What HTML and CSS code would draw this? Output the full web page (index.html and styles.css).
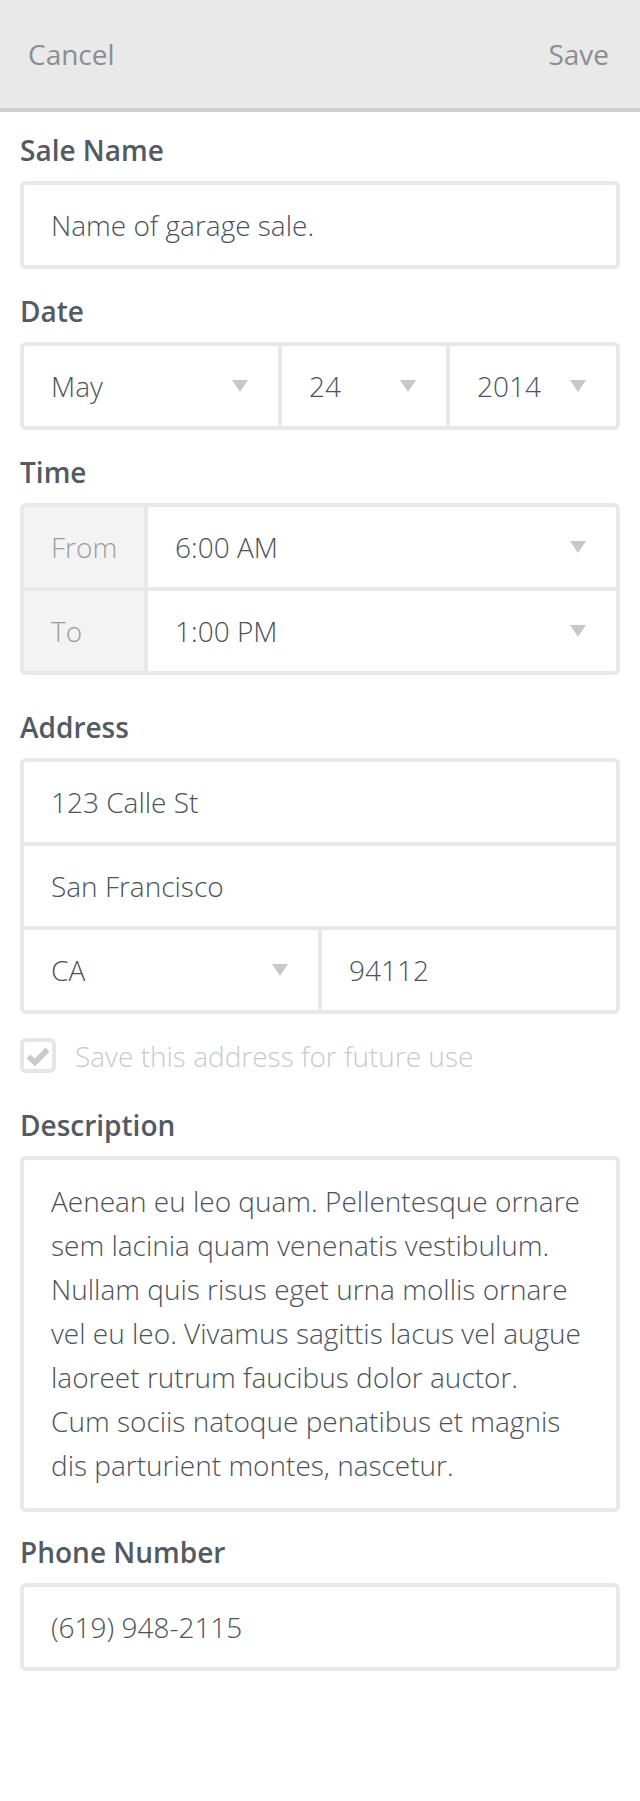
FILE: index.html
```html
<!DOCTYPE html>
<html lang="en">
<head>
<meta charset="utf-8">
<title>Garage Sale</title>
<link rel="stylesheet" href="styles.css">
</head>
<body>
<header class="topbar">
  <span class="nav-btn">Cancel</span>
  <span class="nav-btn">Save</span>
</header>

<main class="form">
  <section class="group">
    <h2 class="label">Sale Name</h2>
    <div class="box">
      <div class="row"><div class="cell">Name of garage sale.</div></div>
    </div>
  </section>

  <section class="group">
    <h2 class="label">Date</h2>
    <div class="box">
      <div class="row">
        <div class="cell select cell-month">May<svg class="caret" width="16" height="12" viewBox="0 0 16 12"><path d="M0 0H16L8 12Z"/></svg></div>
        <div class="cell select cell-day">24<svg class="caret" width="16" height="12" viewBox="0 0 16 12"><path d="M0 0H16L8 12Z"/></svg></div>
        <div class="cell select cell-year">2014<svg class="caret" width="16" height="12" viewBox="0 0 16 12"><path d="M0 0H16L8 12Z"/></svg></div>
      </div>
    </div>
  </section>

  <section class="group">
    <h2 class="label">Time</h2>
    <div class="box">
      <div class="row">
        <div class="cell addon">From</div>
        <div class="cell select grow">6:00 AM<svg class="caret" width="16" height="12" viewBox="0 0 16 12"><path d="M0 0H16L8 12Z"/></svg></div>
      </div>
      <div class="row">
        <div class="cell addon">To</div>
        <div class="cell select grow">1:00 PM<svg class="caret" width="16" height="12" viewBox="0 0 16 12"><path d="M0 0H16L8 12Z"/></svg></div>
      </div>
    </div>
  </section>

  <section class="group group-wide">
    <h2 class="label">Address</h2>
    <div class="box">
      <div class="row"><div class="cell">123 Calle St</div></div>
      <div class="row"><div class="cell">San Francisco</div></div>
      <div class="row">
        <div class="cell select half">CA<svg class="caret" width="16" height="12" viewBox="0 0 16 12"><path d="M0 0H16L8 12Z"/></svg></div>
        <div class="cell half">94112</div>
      </div>
    </div>
    <div class="check-row">
      <span class="checkbox"><svg width="24" height="20" viewBox="0 0 24 20"><path d="M2.5 10.5L9 16.5L21.5 3.5" fill="none" stroke="#cacacd" stroke-width="5.5" stroke-linejoin="miter"/></svg></span>
      <span class="check-text">Save this address for future use</span>
    </div>
  </section>

  <section class="group group-wide">
    <h2 class="label">Description</h2>
    <div class="box">
      <p class="textarea">Aenean eu leo quam. Pellentesque ornare<br>sem lacinia quam venenatis vestibulum.<br>Nullam quis risus eget urna mollis ornare<br>vel eu leo. Vivamus sagittis lacus vel augue<br>laoreet rutrum faucibus dolor auctor.<br>Cum sociis natoque penatibus et magnis<br>dis parturient montes, nascetur.</p>
    </div>
  </section>

  <section class="group group-tight">
    <h2 class="label">Phone Number</h2>
    <div class="box">
      <div class="row"><div class="cell">(619) 948-2115</div></div>
    </div>
  </section>
</main>
</body>
</html>
```

FILE: styles.css
```css
* {
  box-sizing: border-box;
}

html, body {
  margin: 0;
  padding: 0;
  background: #ffffff;
}

body {
  font-family: "Open Sans", "Liberation Sans", sans-serif;
  color: #4b5259;
}

.topbar {
  height: 112px;
  background: #e9e9e9;
  border-bottom: 4px solid #cfcfd1;
  display: flex;
  align-items: center;
  justify-content: space-between;
  padding: 0 31px 0 28px;
}

.nav-btn {
  font-size: 28px;
  font-weight: 400;
  color: #8d8d91;
  line-height: 38px;
}

.form {
  padding: 19px 20px 0 20px;
}

.group + .group {
  margin-top: 23px;
}

.group.group-wide {
  margin-top: 33px;
}

.group.group-tight {
  margin-top: 21px;
}

.label {
  margin: 0 0 12px 0;
  font-size: 28px;
  line-height: 38px;
  font-weight: 600;
  color: #535a61;
}

.box {
  border: 4px solid #e8e8e8;
  border-radius: 6px;
  background: #ffffff;
  overflow: hidden;
}

.row {
  display: flex;
}

.row + .row {
  border-top: 4px solid #e8e8e8;
}

.cell {
  flex: 1 1 auto;
  min-width: 0;
  height: 80px;
  display: flex;
  align-items: center;
  padding: 0 30px 0 27px;
  font-size: 28px;
  font-weight: 300;
  line-height: 38px;
  color: #4b5259;
  white-space: nowrap;
}

.cell + .cell {
  border-left: 4px solid #e8e8e8;
}

.select {
  justify-content: space-between;
}

.caret {
  flex: none;
  fill: #c7c7cc;
}

.cell-month {
  flex: 0 0 254px;
}

.cell-day {
  flex: 0 0 168px;
}

.cell-year {
  flex: 1 1 auto;
}

.addon {
  flex: 0 0 120px;
  padding-right: 0;
  background: #f3f3f3;
  color: #9c9ca0;
}

.grow {
  flex: 1 1 auto;
}

.half {
  flex: 1 1 0;
}

.check-row {
  margin-top: 24px;
  display: flex;
  align-items: center;
  height: 35px;
}

.checkbox {
  flex: none;
  width: 36px;
  height: 35px;
  border: 4px solid #e6e6e6;
  border-radius: 6px;
  display: flex;
  align-items: center;
  justify-content: center;
}

.check-text {
  margin-left: 19px;
  font-size: 28px;
  font-weight: 300;
  line-height: 38px;
  color: #c9c9cc;
}

.textarea {
  margin: 0;
  padding: 19px 20px 21px 27px;
  font-size: 28px;
  font-weight: 300;
  line-height: 44px;
  color: #4b5259;
  white-space: nowrap;
}
```
